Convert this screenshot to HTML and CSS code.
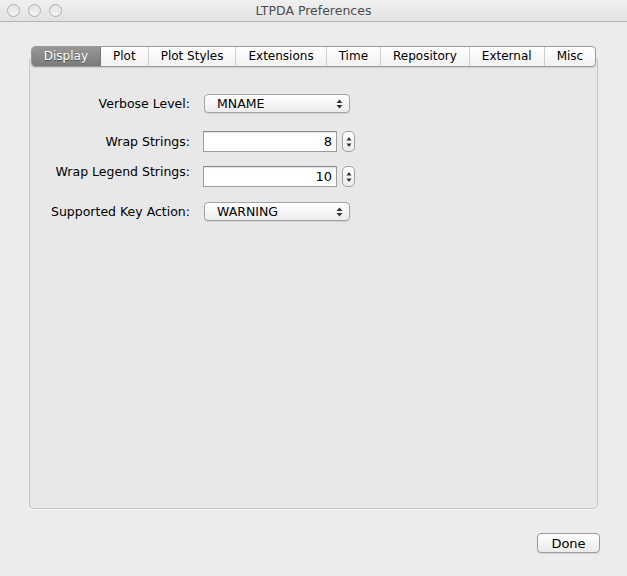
FILE: index.html
```html
<!DOCTYPE html>
<html>
<head>
  <title>LTPDA Preferences</title>
  <link rel="stylesheet" href="styles.css">
</head>
<body>
  <div class="window">
    <div class="titlebar">
      <div class="lights">
        <span class="light"></span>
        <span class="light"></span>
        <span class="light"></span>
      </div>
      <div class="title">LTPDA Preferences</div>
    </div>

    <div class="content">
      <div class="tabs">
        <div class="tab selected">Display</div>
        <div class="tab">Plot</div>
        <div class="tab">Plot Styles</div>
        <div class="tab">Extensions</div>
        <div class="tab">Time</div>
        <div class="tab">Repository</div>
        <div class="tab">External</div>
        <div class="tab last">Misc</div>
      </div>

      <div class="panel">
        <div class="row row-first">
          <label class="label">Verbose Level:</label>
          <div class="popup">
            <span class="popup-text">MNAME</span>
            <svg class="popup-arrows" width="7" height="10" viewBox="0 0 7 10">
              <path d="M3.5 0.5 L6.5 4 L0.5 4 Z M3.5 9.5 L6.5 6 L0.5 6 Z" fill="#333"/>
            </svg>
          </div>
        </div>

        <div class="row row-field">
          <label class="label">Wrap Strings:</label>
          <div class="field">8</div>
          <div class="stepper">
            <svg width="12" height="20" viewBox="0 0 12 20">
              <path d="M6 5 L8.5 8.5 L3.5 8.5 Z M6 15 L8.5 11.5 L3.5 11.5 Z" fill="#333"/>
            </svg>
          </div>
        </div>

        <div class="row row-field2">
          <label class="label label-high">Wrap Legend Strings:</label>
          <div class="field">10</div>
          <div class="stepper">
            <svg width="12" height="20" viewBox="0 0 12 20">
              <path d="M6 5 L8.5 8.5 L3.5 8.5 Z M6 15 L8.5 11.5 L3.5 11.5 Z" fill="#333"/>
            </svg>
          </div>
        </div>

        <div class="row row-last">
          <label class="label">Supported Key Action:</label>
          <div class="popup">
            <span class="popup-text">WARNING</span>
            <svg class="popup-arrows" width="7" height="10" viewBox="0 0 7 10">
              <path d="M3.5 0.5 L6.5 4 L0.5 4 Z M3.5 9.5 L6.5 6 L0.5 6 Z" fill="#333"/>
            </svg>
          </div>
        </div>
      </div>

      <div class="footer">
        <button class="button">Done</button>
      </div>
    </div>
  </div>
</body>
</html>
```

FILE: styles.css
```css
body {
  margin: 0;
  font-family: "DejaVu Sans", "Noto Sans", sans-serif;
  font-size: 12.5px;
  color: #000;
  background: #ececec;
}
.window {
  width: 627px;
  height: 576px;
  background: #ececec;
  display: flex;
  flex-direction: column;
}
.titlebar {
  height: 21px;
  display: flex;
  align-items: center;
  position: relative;
  background: linear-gradient(#f0f0f0, #e2e2e2);
  border-bottom: 1px solid #b4b4b4;
}
.lights {
  display: flex;
  gap: 8px;
  padding-left: 7px;
  z-index: 1;
}
.light {
  width: 11px;
  height: 11px;
  border-radius: 50%;
  border: 1px solid #b0b0b0;
  background: linear-gradient(#e4e4e4, #f2f2f2);
}
.title {
  position: absolute;
  left: 0;
  right: 0;
  text-align: center;
  font-size: 12.5px;
  color: #4d4d4d;
}
.content {
  flex: 1;
  display: flex;
  flex-direction: column;
  padding-top: 24px;
}
.tabs {
  display: flex;
  align-self: center;
  height: 19px;
  margin-bottom: -10px;
  border: 1px solid #9b9b9b;
  border-radius: 4px;
  background: linear-gradient(#ffffff, #f1f1f1);
  box-shadow: 0 1px 1px rgba(0,0,0,0.12);
  overflow: hidden;
  z-index: 1;
  position: relative;
}
.tab {
  display: flex;
  align-items: center;
  padding: 0 12px;
  line-height: 19px;
  border-right: 1px solid #cfcfcf;
  font-size: 12px;
}
.tab.last {
  border-right: none;
}
.tab.selected {
  background: linear-gradient(#979797, #7a7a7a);
  color: #fff;
  text-shadow: 0 1px 0 rgba(0,0,0,0.45);
  border-right-color: #777;
}
.panel {
  margin-left: 29px;
  width: 567px;
  height: 450px;
  border: 1px solid #c6c6c6;
  border-radius: 4px;
  background: #e8e8e8;
  box-shadow: 0 1px 0 rgba(255,255,255,0.6);
}
.row {
  display: flex;
  align-items: center;
}
.row-first {
  margin-top: 36px;
}
.row-field {
  margin-top: 18px;
}
.row-field2 {
  margin-top: 14px;
}
.row-last {
  margin-top: 15px;
}
.label {
  width: 160px;
  text-align: right;
  margin-right: 13px;
}
.label-high {
  align-self: flex-start;
  margin-top: -2px;
}
.popup {
  width: 138px;
  height: 17px;
  margin-left: 1px;
  display: flex;
  align-items: center;
  justify-content: space-between;
  padding: 0 6px 0 0;
  box-sizing: content-box;
  border: 1px solid #a2a2a2;
  border-radius: 4px;
  background: linear-gradient(#ffffff, #ececec);
  box-shadow: 0 1px 1px rgba(0,0,0,0.1);
}
.popup-text {
  padding-left: 12px;
}
.field {
  width: 128px;
  height: 19px;
  line-height: 19px;
  padding-right: 4px;
  text-align: right;
  border: 1px solid #9c9c9c;
  border-top-color: #8a8a8a;
  background: #fff;
  box-shadow: inset 0 1px 1px rgba(0,0,0,0.12);
  font-size: 13px;
}
.stepper {
  width: 11px;
  height: 19px;
  margin-left: 5px;
  border: 1px solid #a0a0a0;
  border-radius: 5px;
  background: linear-gradient(#ffffff, #ececec);
  display: flex;
  align-items: center;
  justify-content: center;
  overflow: hidden;
}
.stepper svg {
  flex: none;
}
.footer {
  display: flex;
  justify-content: flex-end;
  padding: 24px 27px 0 0;
}
.button {
  width: 63px;
  height: 20px;
  padding: 0;
  font-family: "DejaVu Sans", "Noto Sans", sans-serif;
  font-size: 13px;
  color: #000;
  border: 1px solid #9c9c9c;
  border-radius: 4px;
  background: linear-gradient(#ffffff, #eaeaea);
  box-shadow: 0 1px 1px rgba(0,0,0,0.1);
}
```
